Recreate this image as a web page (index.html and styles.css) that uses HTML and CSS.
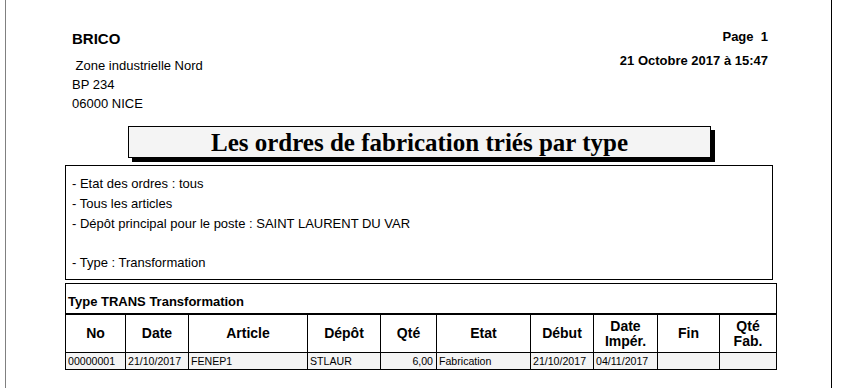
FILE: index.html
```html
<!DOCTYPE html>
<html lang="fr">
<head>
<meta charset="utf-8">
<title>Les ordres de fabrication triés par type</title>
<link rel="stylesheet" href="styles.css">
</head>
<body>
<div class="page">
  <header class="head">
    <div class="company">
      <div class="name">BRICO</div>
      <div class="addr">&nbsp;Zone industrielle Nord</div>
      <div class="addr">BP 234</div>
      <div class="addr">06000 NICE</div>
    </div>
    <div class="meta">
      <div class="pageno">Page&nbsp;&nbsp;1</div>
      <div class="date">21 Octobre 2017 à 15:47</div>
    </div>
  </header>

  <div class="title-box">Les ordres de fabrication triés par type</div>

  <div class="criteria">
    <div class="line">- Etat des ordres : tous</div>
    <div class="line">- Tous les articles</div>
    <div class="line">- Dépôt principal pour le poste : SAINT LAURENT DU VAR</div>
    <div class="line">&nbsp;</div>
    <div class="line">- Type : Transformation</div>
  </div>

  <div class="group">
    <div class="group-head">Type TRANS Transformation</div>
    <div class="grid">
      <div class="th">No</div>
      <div class="th">Date</div>
      <div class="th">Article</div>
      <div class="th">Dépôt</div>
      <div class="th">Qté</div>
      <div class="th">Etat</div>
      <div class="th">Début</div>
      <div class="th">Date<br>Impér.</div>
      <div class="th">Fin</div>
      <div class="th">Qté<br>Fab.</div>

      <div class="td">00000001</div>
      <div class="td">21/10/2017</div>
      <div class="td">FENEP1</div>
      <div class="td">STLAUR</div>
      <div class="td num">6,00</div>
      <div class="td">Fabrication</div>
      <div class="td">21/10/2017</div>
      <div class="td">04/11/2017</div>
      <div class="td"></div>
      <div class="td"></div>
    </div>
  </div>
</div>
</body>
</html>
```

FILE: styles.css
```css
* { box-sizing: border-box; }

html, body {
  margin: 0;
  padding: 0;
  background: #ffffff;
}

body {
  font-family: "Liberation Sans", Arial, sans-serif;
  color: #000;
  overflow: hidden;
}

.page {
  margin-left: 5px;
  width: 827px;
  height: 388px;
  border-left: 1px solid #808080;
  border-right: 1px solid #000;
}

.head {
  display: flex;
  justify-content: space-between;
  align-items: flex-start;
  padding: 29px 63px 0 66px;
  height: 126px;
}

.name {
  margin-top: 1px;
  font-size: 15px;
  font-weight: bold;
  line-height: 18px;
}

.company .name + .addr { margin-top: 8px; }

.addr {
  font-size: 13px;
  line-height: 19px;
}

.meta {
  text-align: right;
  font-size: 13px;
  font-weight: bold;
  line-height: 16px;
}

.date { margin-top: 8px; }

.title-box {
  margin-left: 122px;
  width: 583px;
  height: 32px;
  border: 1px solid #000;
  background: #f4f4f4;
  box-shadow: 4px 4px 0 #000;
  font-family: "Liberation Serif", "Times New Roman", serif;
  font-weight: bold;
  font-size: 25px;
  line-height: 32px;
  text-align: center;
}

.criteria {
  margin: 7px 0 0 59px;
  width: 708px;
  height: 115px;
  border: 1px solid #000;
  padding: 8px 0 0 6px;
  font-size: 13px;
  line-height: 19.8px;
}

.group {
  margin: 3px 0 0 59px;
  width: 712px;
}

.group-head {
  height: 32px;
  border: 1px solid #000;
  border-bottom: 2px solid #000;
  padding: 10px 0 0 2px;
  font-size: 13px;
  font-weight: bold;
  line-height: 16px;
}

.grid {
  display: grid;
  grid-template-columns: 59px 62px 118px 72px 55px 93px 62px 63px 61px 56px;
  grid-template-rows: 37px 16px;
  gap: 1px;
  padding: 0 1px 1px 1px;
  background: #000;
}

.th {
  background: #fff;
  display: flex;
  align-items: center;
  justify-content: center;
  text-align: center;
  font-size: 14px;
  font-weight: bold;
  line-height: 15px;
}

.td {
  background: #f4f4f4;
  font-size: 10.6px;
  line-height: 16px;
  padding-left: 2px;
  white-space: nowrap;
}

.td.num {
  text-align: right;
  padding-right: 3px;
}
```
